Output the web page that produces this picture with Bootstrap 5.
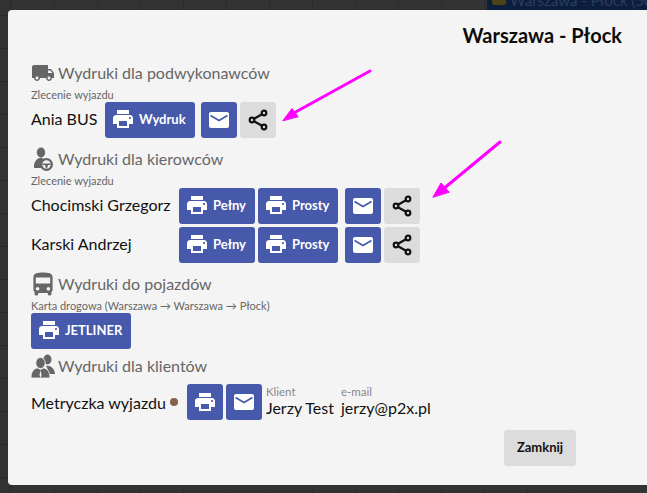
<!DOCTYPE html>
<html lang="pl">
<head>
  <meta charset="UTF-8" />
  <meta name="viewport" content="width=device-width, initial-scale=1.0"/>
  <title>Wydruki</title>
  <link href="https://cdn.jsdelivr.net/npm/bootstrap@5.3.2/dist/css/bootstrap.min.css" rel="stylesheet">
  <style>
    html, body { height: 493px; overflow: hidden; }
    body {
      position: relative;
      font-family: Lato, "Liberation Sans", sans-serif;
      font-size: 16px;
      color: #111;
      background-color: #333;
      background-image:
        repeating-linear-gradient(90deg, #2b2b2b 0 1px, transparent 1px 43px),
        repeating-linear-gradient(180deg, #2b2b2b 0 1px, transparent 1px 33px);
      background-position: 11px 0, 0 15px;
    }
    .top-strip { height: 10px; overflow: hidden; }
    .top-tab {
      width: 160px; height: 10px; background: #0b1e3e; color: #2c3f5c;
      font-size: 15px; line-height: 10px; white-space: nowrap; padding-left: 5px;
      overflow: hidden;
    }
    .top-tab span { position: relative; top: -5px; }
    .top-tab i { display: inline-block; width: 14px; height: 5px; background: #4a4317; margin-right: 4px; vertical-align: top; position: relative; top: 0; border-radius: 0 0 2px 2px; }
    .sheet {
      height: 475px; margin-left: 8px; padding: 0 25px 0 23px;
      background: #f4f4f4; border-radius: 4px 0 0 4px;
    }
    .sheet-title { height: 51px; padding-top: 11px; font-size: 20px; font-weight: 700; line-height: 28px; text-align: right; color: #0c0c0c; }
    .sect-head { height: 24px; line-height: 24px; color: #666; gap: 3px; margin-bottom: 4px; }
    .sect-head.head-last { margin-bottom: 6px; }
    .sect-head svg { width: 24px; height: 24px; fill: #666; flex: none; }
    .sect-sub { font-size: 11px; line-height: 12px; height: 13px; color: #666; margin-bottom: 0; }
    .sect-one { margin-bottom: 9px; }
    .sect-one.sect-tight { margin-bottom: 5px; }
    .print-row { height: 36px; margin-top: 3px; }
    .print-row.first { margin-top: 0; }
    .row-name { line-height: 36px; white-space: nowrap; padding-bottom: 2px; }
    .name-short { width: 74px; }
    .name-long { width: 148px; }
    .row-name.name-low { padding-top: 2px; padding-bottom: 0; }
    .act {
      height: 36px; min-width: 36px; padding: 0; border: 0; border-radius: 3px;
      font-size: 13px; font-weight: 700; line-height: 36px;
      display: inline-flex; align-items: center; justify-content: center;
    }
    .act-blue, .act-blue:hover { background: #4659ab; color: #fff; }
    .act-grey, .act-grey:hover { background: #dcdcdc; color: #111; }
    .act svg { width: 24px; height: 24px; flex: none; }
    .act-text { padding: 0 9px 2px 6px; gap: 4px; }
    .ms-tiny { margin-left: 3px; }
    .ms-wide { margin-left: 6px; }
    .ms-mid { margin-left: 7px; }
    .ms-dot { margin-left: 9px; }
    .field-first { margin-left: 4px; margin-right: 7px; }
    .field-label { font-size: 11.5px; line-height: 12px; color: #888; }
    .field-value { line-height: 20px; }
    .brown-dot { width: 8px; height: 8px; border-radius: 50%; background: #87604c; display: inline-block; }
    .close-row { margin-top: 10px; padding-right: 46px; }
    .close-btn {
      width: 72px; height: 36px; padding: 0; border: 0; border-radius: 3px;
      background: #dcdcdc; color: #111; font-size: 13px; font-weight: 700;
    }
    .arrows { position: absolute; left: 0; top: 0; width: 647px; height: 493px; pointer-events: none; }
  </style>
</head>
<body>
  <svg width="0" height="0" class="position-absolute">
    <symbol id="ic-print" viewBox="0 0 24 24"><path fill="#fff" d="M19 8H5c-1.66 0-3 1.34-3 3v6h4v4h12v-4h4v-6c0-1.66-1.34-3-3-3zm-3 11H8v-5h8v5zm3-7c-.55 0-1-.45-1-1s.45-1 1-1 1 .45 1 1-.45 1-1 1zm-1-9H6v4h12V3z"/></symbol>
    <symbol id="ic-mail" viewBox="0 0 24 24"><rect x="2" y="4" width="20" height="16" rx="2" fill="#fff"/><path d="M3.500 7.500l8.500 5 8.500-5" fill="none" stroke="#4659ab" stroke-width="1.6"/></symbol>
    <symbol id="ic-share" viewBox="0 0 24 24"><g fill="none" stroke="#111" stroke-width="2.200"><circle cx="18" cy="5" r="2.300"/><circle cx="6" cy="12" r="2.300"/><circle cx="18" cy="19" r="2.300"/><path d="M8 10.800l8-4.600M8 13.200l8 4.600"/></g></symbol>
  </svg>

  <div class="top-strip d-flex justify-content-end">
    <div class="top-tab"><i></i><span>Warszawa - Płock (50 06</span></div>
  </div>

  <div class="sheet">
    <div class="sheet-title">Warszawa - Płock</div>

    <div class="sect-one">
      <div class="sect-head d-flex align-items-center">
        <svg viewBox="0 0 24 24"><path d="M20 8h-3V4H3c-1.100 0-2 .9-2 2v11h2c0 1.660 1.340 3 3 3s3-1.340 3-3h6c0 1.660 1.340 3 3 3s3-1.340 3-3h2v-5l-3-4zM6 18.500c-.83 0-1.500-.67-1.500-1.500s.67-1.500 1.500-1.500 1.500.67 1.500 1.500-.67 1.500-1.500 1.500zm13.500-9l1.960 2.500H17V9.500h2.500zm-1.500 9c-.83 0-1.500-.67-1.500-1.500s.67-1.500 1.500-1.500 1.500.67 1.500 1.500-.67 1.500-1.500 1.500z"/></svg>
        <span>Wydruki dla podwykonawców</span>
      </div>
      <div class="sect-sub">Zlecenie wyjazdu</div>
      <div class="print-row first d-flex align-items-center">
        <span class="row-name name-short">Ania BUS</span>
        <button class="btn act act-blue act-text"><svg><use href="#ic-print"/></svg>Wydruk</button>
        <button class="btn act act-blue ms-wide"><svg><use href="#ic-mail"/></svg></button>
        <button class="btn act act-grey ms-tiny"><svg><use href="#ic-share"/></svg></button>
      </div>
    </div>

    <div class="sect-one">
      <div class="sect-head d-flex align-items-center">
        <svg viewBox="0 0 24 24"><ellipse cx="10" cy="5.500" rx="4.200" ry="5"/><path d="M3 21c-.5-4 1-7.500 4-9.500l3-1 3 1.500c-2.500 2-3.500 5-2 9z"/><circle cx="15.500" cy="17.500" r="6.500"/><circle cx="15.500" cy="17.500" r="4.200" fill="#f4f4f4"/><path d="M11.500 16.500h8v1.500h-2.500l-1 3.500h-1l-1-3.500h-2.500z"/></svg>
        <span>Wydruki dla kierowców</span>
      </div>
      <div class="sect-sub">Zlecenie wyjazdu</div>
      <div class="print-row first d-flex align-items-center">
        <span class="row-name name-long">Chocimski Grzegorz</span>
        <button class="btn act act-blue act-text"><svg><use href="#ic-print"/></svg>Pełny</button>
        <button class="btn act act-blue act-text ms-tiny"><svg><use href="#ic-print"/></svg>Prosty</button>
        <button class="btn act act-blue ms-mid"><svg><use href="#ic-mail"/></svg></button>
        <button class="btn act act-grey ms-tiny"><svg><use href="#ic-share"/></svg></button>
      </div>
      <div class="print-row d-flex align-items-center">
        <span class="row-name name-long">Karski Andrzej</span>
        <button class="btn act act-blue act-text"><svg><use href="#ic-print"/></svg>Pełny</button>
        <button class="btn act act-blue act-text ms-tiny"><svg><use href="#ic-print"/></svg>Prosty</button>
        <button class="btn act act-blue ms-mid"><svg><use href="#ic-mail"/></svg></button>
        <button class="btn act act-grey ms-tiny"><svg><use href="#ic-share"/></svg></button>
      </div>
    </div>

    <div class="sect-one sect-tight">
      <div class="sect-head d-flex align-items-center">
        <svg viewBox="3 1.500 18 20"><path d="M4 16c0 .88.39 1.670 1 2.220V20c0 .55.45 1 1 1h1c.55 0 1-.45 1-1v-1h8v1c0 .55.45 1 1 1h1c.55 0 1-.45 1-1v-1.780c.61-.55 1-1.340 1-2.220V6c0-3.500-3.580-4-8-4s-8 .5-8 4v10zm3.500 1c-.83 0-1.500-.67-1.500-1.500S6.670 14 7.500 14s1.500.67 1.500 1.500S8.330 17 7.500 17zm9 0c-.83 0-1.500-.67-1.500-1.500s.67-1.500 1.500-1.500 1.500.67 1.500 1.500-.67 1.500-1.500 1.500zm1.500-6H6V6h12v5z"/></svg>
        <span>Wydruki do pojazdów</span>
      </div>
      <div class="sect-sub">Karta drogowa (Warszawa → Warszawa → Płock)</div>
      <div class="print-row first d-flex align-items-center">
        <button class="btn act act-blue act-text"><svg><use href="#ic-print"/></svg>JETLINER</button>
      </div>
    </div>

    <div>
      <div class="sect-head head-last d-flex align-items-center">
        <svg viewBox="0 0 24 24"><ellipse cx="16.500" cy="5.500" rx="4" ry="5"/><path d="M15 12c4-1 8.500 2 9 8h-6c-.5-3-1.500-6-3-8z"/><ellipse cx="9.500" cy="9" rx="4.700" ry="5.500" stroke="#f4f4f4" stroke-width=".8"/><path d="M0 24c0-6 2.500-9.500 6.500-10l3 1.500 3-1.500c4 .5 6.500 4 6.500 10z" stroke="#f4f4f4" stroke-width=".8"/><path d="M9.500 16l1 5-1 3-1-3z" fill="#f4f4f4"/></svg>
        <span>Wydruki dla klientów</span>
      </div>
      <div class="print-row first d-flex align-items-center">
        <span class="row-name name-low">Metryczka wyjazdu</span>
        <span class="brown-dot ms-1"></span>
        <button class="btn act act-blue ms-dot"><svg><use href="#ic-print"/></svg></button>
        <button class="btn act act-blue ms-tiny"><svg><use href="#ic-mail"/></svg></button>
        <div class="field-first"><div class="field-label">Klient</div><div class="field-value">Jerzy Test</div></div>
        <div><div class="field-label">e-mail</div><div class="field-value">jerzy@p2x.pl</div></div>
      </div>
    </div>

    <div class="close-row d-flex justify-content-end">
      <button class="btn close-btn">Zamknij</button>
    </div>
  </div>

  <svg class="arrows" viewBox="0 0 647 493">
    <g stroke="#f0f" stroke-width="3" stroke-linecap="round" fill="#f0f">
      <path d="M370 71L292 114" fill="none"/>
      <path d="M283 120.500L292 108.500L298 116.500z" stroke-width="1"/>
      <path d="M500 142L442 190" fill="none"/>
      <path d="M433 197L441 183L449 192z" stroke-width="1"/>
    </g>
  </svg>
  <script src="https://cdn.jsdelivr.net/npm/bootstrap@5.3.2/dist/js/bootstrap.bundle.min.js"></script>
</body>
</html>
